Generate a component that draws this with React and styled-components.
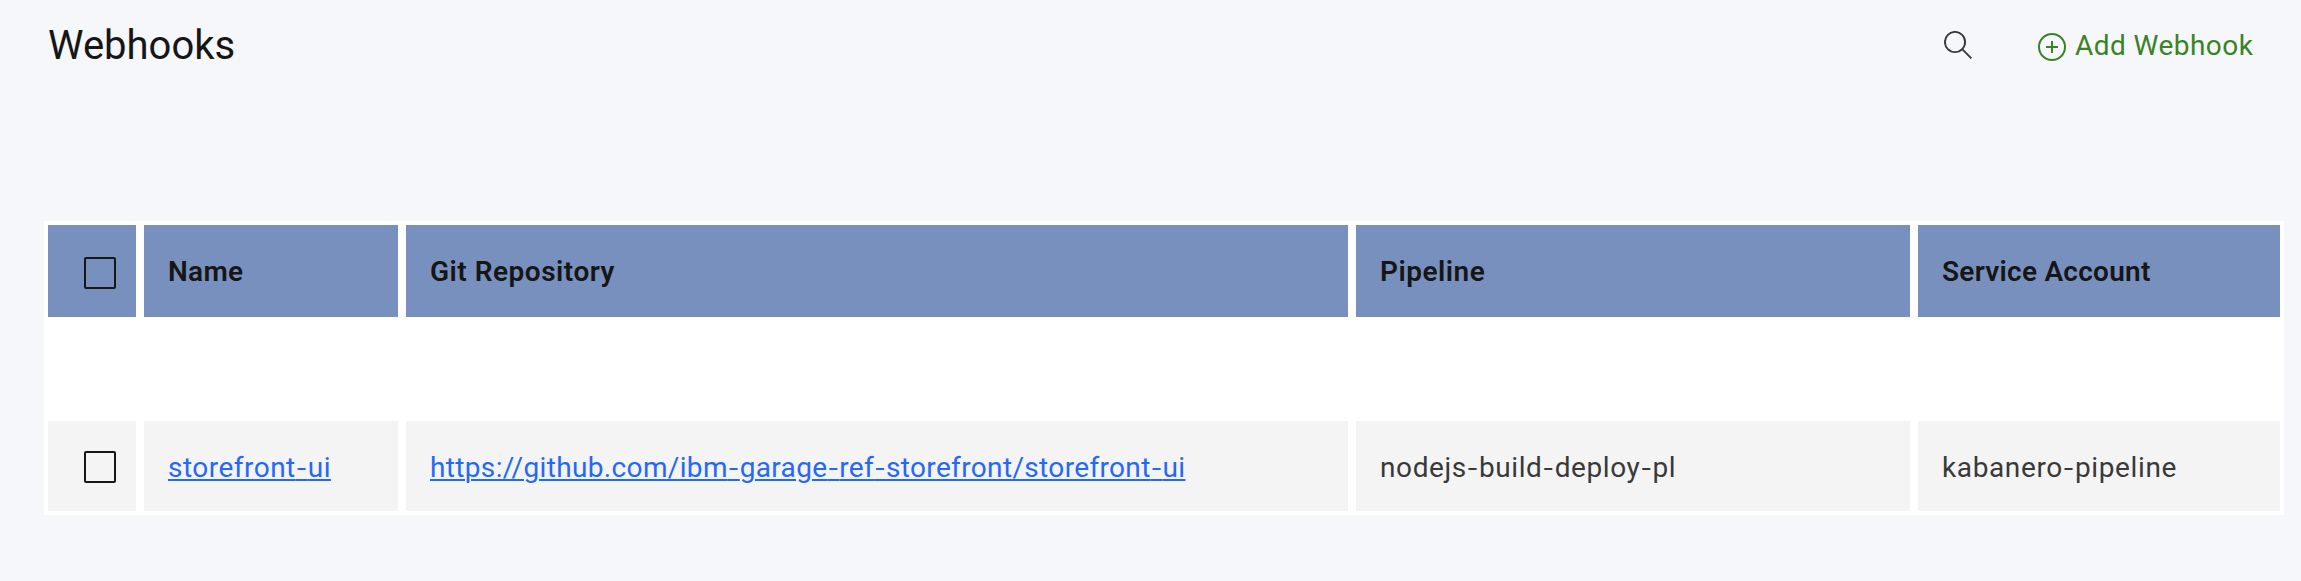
import React, { Fragment } from "react";
import styled, { createGlobalStyle } from "styled-components";

const GlobalStyle = createGlobalStyle`
  body {
    margin: 0;
    background: #f5f7fb;
    color: #161616;
    font-family: Roboto, "Liberation Sans", sans-serif;
    font-size: 28px;
  }
`;

const Page = styled.main`
  box-sizing: border-box;
  width: 2301px;
  height: 581px;
  padding: 0 17px 0 44px;
  overflow: hidden;
`;

const Toolbar = styled.header`
  box-sizing: border-box;
  display: flex;
  align-items: flex-start;
  height: 221px;
  padding: 23px 28px 0 4px;
`;

const Title = styled.h1`
  margin: 0;
  font-size: 40px;
  font-weight: 400;
  line-height: 46px;
`;

const IconButton = styled.button`
  display: flex;
  margin: 8px 66px 0 auto;
  padding: 0;
  border: 0;
  background: none;
  color: #393939;
`;

const AddButton = styled.button`
  display: flex;
  align-items: flex-start;
  gap: 9px;
  width: 218px;
  margin-top: 10px;
  padding: 0;
  border: 0;
  background: none;
  color: #398326;
  font: inherit;
  line-height: 32px;
  letter-spacing: 0.45px;
  white-space: nowrap;
`;

const AddLabel = styled.span`
  margin-top: -3px;
`;

const Table = styled.div`
  display: grid;
  row-gap: 104px;
  padding: 4px;
  background: #fff;
`;

const Row = styled.div`
  display: grid;
  grid-template-columns: 88px 254px 942px 554px 362px;
  column-gap: 8px;
  height: ${(p) => (p.$head ? "92px" : "90px")};
`;

const Cell = styled.div`
  display: flex;
  align-items: center;
  padding: 2px 24px 0;
  background: #f4f4f4;
  color: #393939;
  letter-spacing: ${(p) => p.$spacing || "0"};
  white-space: nowrap;
`;

const HeadCell = styled(Cell)`
  padding-top: 0;
  background: #7890be;
  color: #161616;
  font-weight: 600;
`;

const Checkbox = styled.span`
  box-sizing: border-box;
  flex: none;
  width: 32px;
  height: 32px;
  margin-left: 12px;
  margin-top: ${(p) => p.$drop || "0"};
  border: 2px solid #161616;
  border-radius: 2px;
`;

const Link = styled.a`
  color: #2468fa;
  text-decoration: underline;
  text-decoration-thickness: 2px;
  text-underline-offset: 2px;
`;

const Dash = styled.span`
  font-family: Inter, sans-serif;
  font-size: 25px;
`;

const columns = [
  { label: "Name", spacing: "0.3px" },
  { label: "Git Repository", spacing: "0.5px" },
  { label: "Pipeline", spacing: "0.5px" },
  { label: "Service Account", spacing: "0.25px" },
];

const webhook = [
  { text: "storefront-ui", spacing: "0.48px", link: true },
  {
    text: "https://github.com/ibm-garage-ref-storefront/storefront-ui",
    spacing: "0.345px",
    link: true,
  },
  { text: "nodejs-build-deploy-pl", spacing: "0.6px" },
  { text: "kabanero-pipeline", spacing: "0.62px" },
];

function Dashed({ text }) {
  return text.split("-").map((part, i) => (
    <Fragment key={i}>
      {i > 0 && <Dash>-</Dash>}
      {part}
    </Fragment>
  ));
}

function SearchIcon() {
  return (
    <svg width="28" height="28" viewBox="0 0 28 28" fill="none" stroke="currentColor" strokeWidth="1.9">
      <circle cx="11" cy="11" r="10.1" />
      <path d="M18.2 18.2L27.4 27.4" />
    </svg>
  );
}

function AddIcon() {
  return (
    <svg width="28" height="28" viewBox="0 0 28 28" fill="none" stroke="currentColor" strokeWidth="2">
      <circle cx="14" cy="14" r="13" />
      <path d="M14 8v12M8 14h12" />
    </svg>
  );
}

export default function App() {
  return (
    <Page>
      <GlobalStyle />
      <Toolbar>
        <Title>Webhooks</Title>
        <IconButton aria-label="Search">
          <SearchIcon />
        </IconButton>
        <AddButton>
          <AddIcon />
          <AddLabel>Add Webhook</AddLabel>
        </AddButton>
      </Toolbar>
      <Table>
        <Row $head>
          <HeadCell>
            <Checkbox $drop="4px" />
          </HeadCell>
          {columns.map((c) => (
            <HeadCell key={c.label} $spacing={c.spacing}>
              <span>{c.label}</span>
            </HeadCell>
          ))}
        </Row>
        <Row>
          <Cell>
            <Checkbox />
          </Cell>
          {webhook.map((c) => (
            <Cell key={c.text} $spacing={c.spacing}>
              {c.link ? (
                <Link>
                  <Dashed text={c.text} />
                </Link>
              ) : (
                <span>
                  <Dashed text={c.text} />
                </span>
              )}
            </Cell>
          ))}
        </Row>
      </Table>
    </Page>
  );
}
